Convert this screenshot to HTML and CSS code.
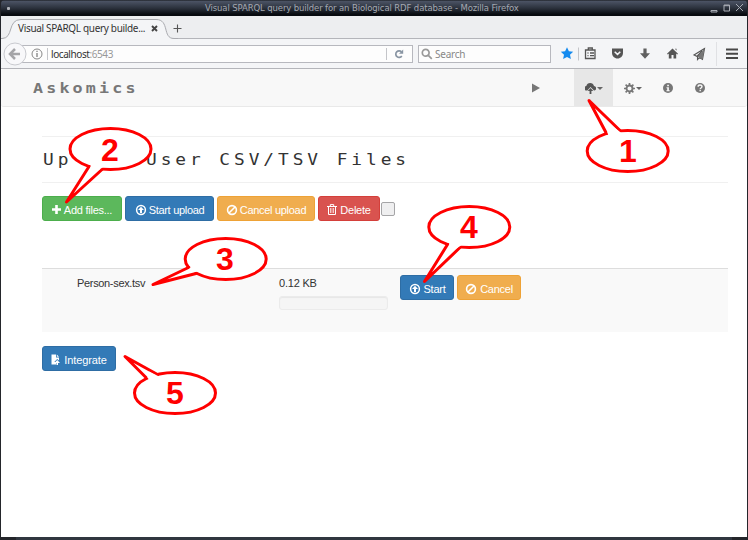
FILE: index.html
```
<!DOCTYPE html>
<html lang="en">
<head>
<meta charset="utf-8">
<title>Visual SPARQL query builder for an Biological RDF database</title>
<link rel="stylesheet" href="styles.css">
</head>
<body>
<svg class="defs" width="0" height="0" aria-hidden="true">
  <defs>
    <symbol id="up" viewBox="0 0 12 12"><circle cx="6" cy="6" r="4.400" fill="none" stroke="currentColor" stroke-width="1.500"/><path d="M6 2.800 9 6H7v3H5V6H3z" fill="currentColor"/></symbol>
    <symbol id="ban" viewBox="0 0 12 12"><circle cx="6" cy="6" r="4.400" fill="none" stroke="currentColor" stroke-width="1.600"/><path d="M3 9 9 3" stroke="currentColor" stroke-width="1.600"/></symbol>
  </defs>
</svg>
<div class="window">
  <header class="titlebar">
    <i class="dot"></i>
    <span class="wintitle">Visual SPARQL query builder for an Biological RDF database - Mozilla Firefox</span>
    <svg class="wincontrols" width="34" height="10" viewBox="0 0 34 10" fill="none" stroke="#a9adb5"><path d="M1 7.500h6v1.500H1z"/><path d="M14 2h5.500v6H14zM14 2.700h5.500"/><path d="m26 1 7 7m0-7-7 7"/></svg>
  </header>
  <div class="tabs">
    <svg class="tabshape" width="177" height="22" viewBox="0 0 177 22"><path d="M0 21.500h1C13 21.500 6 2.500 20 2.500h135c14 0 6 19 18 19h4v.5H0z" fill="#f4f5f7"/><path d="M0 21.500h1C13 21.500 6 2.500 20 2.500h135c14 0 6 19 18 19h4" fill="none" stroke="#aaabb0"/></svg>
    <span class="tabname">Visual SPARQL query builde...</span>
    <svg class="tabclose" width="7" height="7" viewBox="0 0 7 7"><path d="m1 1 5 5m0-5-5 5" stroke="#444" stroke-width="1.900"/></svg>
    <svg class="newtab" width="9" height="9" viewBox="0 0 9 9"><path d="M4.500.5v8M.5 4.500h8" stroke="#555" stroke-width="1.100"/></svg>
  </div>
  <div class="toolbar">
    <svg class="back" width="24" height="24" viewBox="0 0 24 24"><circle cx="12" cy="12" r="11" fill="#f8f8fa" stroke="#c9cacf"/><path d="m12 7-5 5 5 5M7.500 12H17" fill="none" stroke="#a5a5a8" stroke-width="2.500"/></svg>
    <div class="url">
      <svg width="12" height="12" viewBox="0 0 12 12"><circle cx="6" cy="6" r="5" fill="none" stroke="#888"/><path d="M6 5v4M6 2.700V4" stroke="#777" stroke-width="1.200"/></svg>
      <i class="sep"></i>
      <span>localhost<span class="port">:6543</span></span>
      <i class="sep reloadsep"></i>
      <svg width="10" height="10" viewBox="0 0 10 10"><path d="M7.800 7A3.300 3.300 0 1 1 7.500 2.800" fill="none" stroke="#8995a3" stroke-width="1.700"/><path d="M9.200.5v4.200H5z" fill="#8995a3"/></svg>
    </div>
    <div class="search">
      <svg width="12" height="12" viewBox="0 0 12 12" fill="none" stroke="#999" stroke-width="1.700"><circle cx="4.700" cy="4.700" r="3.400"/><path d="m7.300 7.300 3.500 3.500"/></svg>
      <span>Search</span>
    </div>
    <svg class="tools" width="190" height="26" viewBox="0 0 190 26">
      <path d="m11 6.200 1.900 4 4.300.5-3.200 3 .9 4.400-3.900-2.200-3.900 2.200.9-4.400-3.200-3 4.300-.5z" fill="#158bef"/>
      <path d="M22.500 6.500v13" stroke="#c4c5c9"/>
      <path d="M29.500 9h9.500v8.500h-9.500zM32.300 8.500V7h4v1.500M31.500 12h1M34 12h4M31.500 14.700h1M34 14.700h4" fill="none" stroke="#555" stroke-width="1.300"/>
      <path d="M56 7.500h11V12c0 3-2.500 5.500-5.500 5.500S56 15 56 12z" fill="#555"/><path d="m58.700 10.700 2.800 2.700 2.800-2.700" fill="none" stroke="#f4f5f7" stroke-width="1.500"/>
      <path d="M87.400 7.500h3.200v4.700H94l-5 5.500-5-5.500h3.400z" fill="#606060"/>
      <path d="m111 12.700 5.500-5.200 5.500 5.200-.8.800-1-.9v5h-2.700V14h-2v3.600h-2.700v-5l-1 .9zM119 7.700h1.500v2z" fill="#555"/>
      <path d="M148.500 7.500 138 14l2.800 1.300 5.400-5.300-4.700 5.800v2.800l1.800-2 3.200 1.700z" fill="none" stroke="#555" stroke-width="1.100"/><path d="m148.500 7.500-7 8.300 5 2.500z" fill="#777"/>
      <path d="M160.500 1v24" stroke="#e0e1e4"/>
      <path d="M170 8.500h12M170 12.800h12M170 17h12" stroke="#484848" stroke-width="2"/>
    </svg>
  </div>
  <div class="page">
  <nav class="navbar">
    <div class="brand"><span>Askomics</span></div>
    <div class="item play"><svg width="8" height="10" viewBox="0 0 8 10"><path d="M0 .5 8 5 0 9.500z"/></svg></div>
    <div class="item upload"><svg width="11" height="11" viewBox="0 0 11 11"><path d="M2 7.500A2.200 2.200 0 0 1 1.300 3 4 4 0 0 1 9 3a2.300 2.300 0 0 1 .5 4.500H9L5.500 3.900 2.300 7.500zM5.500 5 8.300 8H6.400v3H4.600V8H2.700z"/></svg><i class="caret"></i></div>
    <div class="item gear"><svg width="11" height="11" viewBox="0 0 11 11" fill="none" stroke="#777"><circle cx="5.500" cy="5.500" r="3" stroke-width="1.900"/><path d="M5.500 0v2M5.500 9v2M0 5.500h2M9 5.500h2M1.600 1.600 3 3M8 8l1.400 1.400M1.600 9.400 3 8M8 3l1.400-1.400" stroke-width="1.700"/></svg><i class="caret"></i></div>
    <div class="item info"><svg width="10" height="10" viewBox="0 0 10 10"><circle cx="5" cy="5" r="5"/><path d="M4.200 1.700h1.700v1.500H4.200zM3.500 4.200h2.400v3h.8v1H3.400v-1h.8v-2h-.7z" fill="#f8f8f8"/></svg></div>
    <div class="item help"><svg width="10" height="10" viewBox="0 0 10 10"><circle cx="5" cy="5" r="5"/><path d="M3.100 3.700C3.100 1.500 7 1.500 7 3.600 7 5 5.200 4.900 5.200 6.200M5.200 6.900v1.400" fill="none" stroke="#f8f8f8" stroke-width="1.400"/></svg></div>
  </nav>
  <main>
    <h1><span class="first">Up</span><span>User CSV/TSV Files</span></h1>
    <div class="actions">
      <button class="btn green add"><svg width="9" height="9" viewBox="0 0 9 9"><path d="M4.500 0v9M0 4.500h9" stroke="#fff" stroke-width="2.600"/></svg><span>Add files...</span></button>
      <button class="btn blue startall"><svg width="12" height="12"><use href="#up"/></svg><span>Start upload</span></button>
      <button class="btn orange cancelall"><svg width="12" height="12"><use href="#ban"/></svg><span>Cancel upload</span></button>
      <button class="btn red delete"><svg width="10" height="11" viewBox="0 0 10 11" fill="none" stroke="#fff"><path d="M0 2.500h10M3.300 2V.6h3.400V2M1.500 3v7.500h7V3M3.800 4v5M6.200 4v5"/></svg><span>Delete</span></button>
      <i class="check"></i>
    </div>
    <section class="file">
      <span class="filename">Person-sex.tsv</span>
      <div class="size"><span>0.12 KB</span><i class="progress"></i></div>
      <button class="btn blue start"><svg width="12" height="12"><use href="#up"/></svg><span>Start</span></button>
      <button class="btn orange cancel"><svg width="12" height="12"><use href="#ban"/></svg><span>Cancel</span></button>
    </section>
    <button class="btn blue integrate"><svg width="9" height="11" viewBox="0 0 9 11"><path d="M.5.500H5v3h3v3L6.200 5 3.300 8H5v2.500H.5zM5.800.5 8 2.800H5.800z" fill="#fff"/><path d="M6.200 6 9 9H7v2H5.500V9H3.500z" fill="#fff"/></svg><span>Integrate</span></button>
  </main>
  </div>
  <footer></footer>
</div>
<svg class="callouts" width="748" height="540" viewBox="0 0 748 540">
  <g class="bubbles">
    <ellipse cx="627.700" cy="151" rx="40.500" ry="20.500"/>
    <ellipse cx="110.500" cy="149" rx="40.500" ry="20.500"/>
    <ellipse cx="225.700" cy="259" rx="40.500" ry="20.500"/>
    <ellipse cx="469.300" cy="227" rx="40.500" ry="20.500"/>
    <ellipse cx="175" cy="393" rx="40.500" ry="20.500"/>
  </g>
  <g class="tails">
    <path d="M606.500 133.500 589 100.500 620 130.500"/>
    <path d="M89 166.500 66.500 202 102 169.500"/>
    <path d="M188.500 267.500 153 284.500 196 273.500"/>
    <path d="M447.500 244.500 424.500 281.500 460 247.500"/>
    <path d="M146.500 378 125 356.500 157.500 374.500"/>
  </g>
  <g class="joints">
    <path d="M607.300 132 608.500 136 621 133 619.500 131.500 612 126z"/>
    <path d="M90.500 167 91 163.500 103 167 101 168.500 92 174z"/>
    <path d="M190 268 191.500 265.500 198.500 271.500 195.500 272 187 272z"/>
    <path d="M449 245 449.500 241.500 461.500 245 459.500 246.500 450 252z"/>
    <path d="M147.500 377.500 149.500 380.500 159 377 157 375.500 149 371.500z"/>
  </g>
  <g class="num">
    <text x="628" y="162">1</text><text x="110" y="160.500">2</text><text x="225" y="270">3</text><text x="469" y="238">4</text><text x="175" y="404">5</text>
  </g>
</svg>
</body>
</html>
```
FILE: styles.css
```
* { box-sizing: border-box; }
body { margin: 0; width: 748px; height: 540px; overflow: hidden; position: relative; background: #24262b; font: 11px "Liberation Sans", Arial, sans-serif; color: #333; }
svg { display: block; flex: none; }
i { display: block; flex: none; }
.defs { position: absolute; }
.window { width: 748px; height: 540px; display: flex; flex-direction: column; padding: 0 1px; }
.titlebar { height: 16px; flex: none; display: flex; align-items: center; background: linear-gradient(#202329 0, #4a5263 9%, #2c323d 50%, #080b10 90%); border-radius: 4px 4px 0 0; }
.dot { width: 3px; height: 3px; margin-left: 6px; background: #b0b3b9; border-radius: 1px; }
.wintitle { margin-left: 195px; width: 320px; font: 8.5px/16px "DejaVu Sans", sans-serif; letter-spacing: -.12px; color: #a5a9b2; white-space: nowrap; }
.wincontrols { margin-left: 185px; }
.tabs { height: 23px; flex: none; display: flex; align-items: center; background: #edeef0; border-bottom: 1px solid #b4b5ba; }
.tabshape { margin-bottom: -1px; }
.tabname { margin-left: -160px; width: 133px; font: 10px "Noto Sans", sans-serif; letter-spacing: -.33px; white-space: nowrap; color: #333; padding-top: 2px; }
.tabclose { margin-top: 2px; }
.newtab { margin-left: 15px; margin-top: 2px; }
.toolbar { height: 30px; flex: none; display: flex; align-items: center; background: #f4f5f7; border-bottom: 1px solid #b4b5ba; font: 10px "Noto Sans", sans-serif; letter-spacing: -.42px; }
.back { margin-left: 2px; z-index: 1; }
.url { width: 391px; height: 18px; margin-left: -5px; display: flex; align-items: center; background: #fdfdfd; border: 1px solid #b7b8be; padding-left: 8px; color: #333; }
.sep { width: 1px; height: 12px; background: #c4c5c9; margin: 0 3px 0 4px; }
.port { color: #999; }
.reloadsep { margin-left: auto; margin-right: 7px; }
.url svg:last-child { margin-right: 8px; }
.search { width: 133px; height: 18px; margin-left: 5px; display: flex; align-items: center; gap: 2px; padding-left: 2px; background: #fdfdfd; border: 1px solid #b7b8be; color: #888; letter-spacing: -.25px; }
.tools { margin-left: 5px; }
.page { flex: 1; display: flex; flex-direction: column; background: #fff; }
.navbar { height: 38px; flex: none; display: flex; align-items: center; background: #f8f8f8; border-bottom: 1px solid #e9e9e9; border-radius: 3px; }
.brand { margin-left: 32px; width: 499px; padding-top: 1px; font: bold 14.5px "DejaVu Sans Mono", monospace; letter-spacing: 2.75px; color: #777; }
.brand span, h1 span { display: inline-block; transform: scaleX(1.15); transform-origin: left; }
.item { display: flex; align-items: center; fill: #777; height: 37px; padding-top: 1px; }
.play { width: 42px; }
.upload { width: 39px; background: #e7e7e7; fill: #555; padding-left: 11px; }
.caret { border: 3px solid transparent; border-top-color: #666; border-bottom: 0; margin-left: 1px; }
.gear { width: 50px; padding-left: 11px; }
.info { width: 32px; }
main { flex: 1; padding: 29px 19px 0 41px; }
h1 { display: flex; margin: 0; height: 47px; border: solid #f0f0f0; border-width: 1px 0; padding-left: 1px; font: 15.5px/46px "DejaVu Sans Mono", monospace; letter-spacing: 3.420px; white-space: nowrap; }
h1 .first { width: 103px; flex: none; transform: none; }
h1 .first { width: 89.600px; margin-right: 13.400px; transform: scaleX(1.15); }
.actions { display: flex; align-items: center; gap: 3px; margin-top: 13px; height: 25px; }
.btn { height: 25px; margin: 0; padding: 2px 0 0; border: 1px solid; border-radius: 3px; display: flex; align-items: center; justify-content: center; gap: 3px; font: 11px "Liberation Sans", Arial, sans-serif; letter-spacing: -.25px; color: #fff; white-space: nowrap; }
.green { background: #5cb85c; border-color: #4cae4c; }
.blue { background: #337ab7; border-color: #2e6da4; }
.orange { background: #f0ad4e; border-color: #eea236; }
.red { background: #d9534f; border-color: #d43f3a; }
.add { width: 80px; }
.startall { width: 89px; }
.cancelall { width: 98px; }
.delete { width: 62px; }
.startall, .cancelall { letter-spacing: -.3px; gap: 2px; }
.check { width: 14px; height: 14px; margin-left: -2px; background: #efeff0; border: 1px solid #a5a5a7; border-radius: 2px; }
.file { margin-top: 47px; height: 64px; display: flex; align-items: flex-start; padding-top: 6px; background: #f9f9f9; border-top: 1px solid #ddd; }
.filename { margin: 2px 0 0 35px; width: 202px; letter-spacing: -.33px; }
.size { width: 121px; padding-top: 2px; letter-spacing: -.2px; }
.progress { width: 109px; height: 14px; margin-top: 7px; border-radius: 3px; background: #f5f5f5; border: 1px solid #ebebeb; box-shadow: inset 0 1px 1px #e7e7e7; }
.start { width: 54px; margin-right: 3px; }
.cancel { width: 64px; }
.integrate { width: 74px; margin-top: 14px; gap: 4px; letter-spacing: -.1px; }
footer { height: 3px; flex: none; background: #30363f; margin: 0 15px; }
.callouts { position: absolute; left: 0; top: 0; }
.bubbles, .tails { fill: #fff; stroke: #f00; stroke-width: 3px; stroke-linejoin: round; stroke-linecap: round; }
.joints { fill: #fff; }
.num { font: bold 32px "Liberation Sans", Arial, sans-serif; fill: #f00; text-anchor: middle; }
```
